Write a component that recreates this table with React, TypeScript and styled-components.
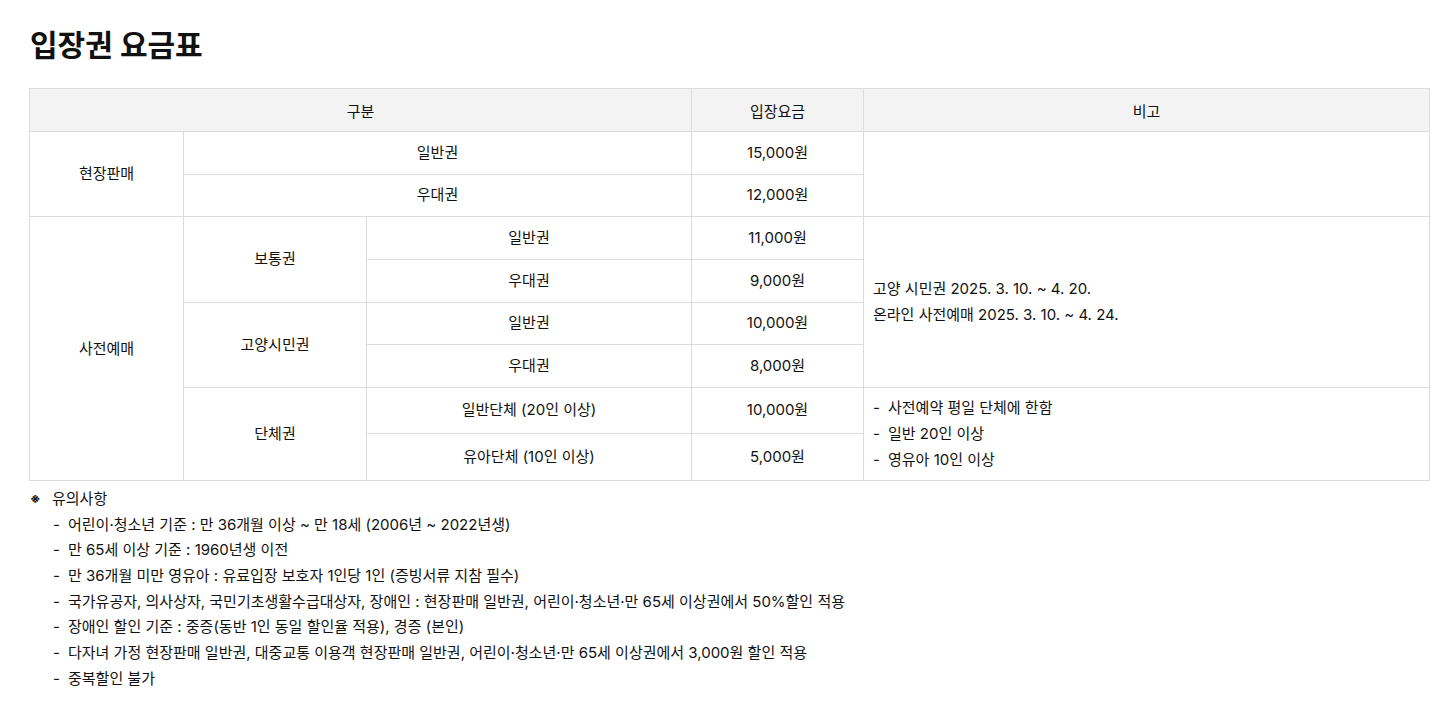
import React from 'react'
import styled, { createGlobalStyle } from 'styled-components'

const GlobalStyle = createGlobalStyle`
  html, body {
    margin: 0;
    padding: 0;
    background: #fff;
  }
  body {
    font-family: Inter, "Noto Sans CJK KR", "Noto Sans", sans-serif;
    color: #111;
  }
`

const Page = styled.div`
  padding: 22px 25px 30px 29px;
`

const Title = styled.h2`
  margin: 0 0 20px 1px;
  font-size: 30px;
  font-weight: 700;
  line-height: 46px;
  letter-spacing: 0;
`

const Table = styled.table`
  width: 1400px;
  border-collapse: collapse;
  table-layout: fixed;
  font-size: 15px;
`

const Th = styled.th`
  height: 42px;
  padding: 0;
  background: #f3f3f3;
  border: 1px solid #dcdcdc;
  font-weight: 400;
  text-align: center;
  vertical-align: middle;
`

const Td = styled.td<{ $left?: boolean; $h?: number }>`
  height: ${p => (p.$h ? `${p.$h}px` : '41.67px')};
  padding: ${p => (p.$left ? '0 9px' : '0')};
  border: 1px solid #dcdcdc;
  text-align: ${p => (p.$left ? 'left' : 'center')};
  vertical-align: middle;
  line-height: 26px;
`

const DashList = styled.ul`
  margin: 0;
  padding: 0;
  list-style: none;
`

const DashItem = styled.li`
  display: flex;
  line-height: 26px;
  &::before {
    content: '-';
    width: 15px;
    flex: none;
  }
`

const Notes = styled.div`
  margin-top: 5px;
  font-size: 15px;
  line-height: 25.7px;
`

const NoteHead = styled.div`
  display: flex;
  padding-left: 1px;
  &::before {
    content: '※';
    width: 22px;
    flex: none;
    font-size: 13px;
    font-weight: 700;
  }
`

const NoteList = styled.ul`
  margin: 0;
  padding: 0 0 0 24px;
  list-style: none;
`

const NoteItem = styled.li`
  display: flex;
  &::before {
    content: '-';
    width: 15px;
    flex: none;
  }
`

const notes = [
  '어린이·청소년 기준 : 만 36개월 이상 ~ 만 18세 (2006년 ~ 2022년생)',
  '만 65세 이상 기준 : 1960년생 이전',
  '만 36개월 미만 영유아 : 유료입장 보호자 1인당 1인 (증빙서류 지참 필수)',
  '국가유공자, 의사상자, 국민기초생활수급대상자, 장애인 : 현장판매 일반권, 어린이·청소년·만 65세 이상권에서 50%할인 적용',
  '장애인 할인 기준 : 중증(동반 1인 동일 할인율 적용), 경증 (본인)',
  '다자녀 가정 현장판매 일반권, 대중교통 이용객 현장판매 일반권, 어린이·청소년·만 65세 이상권에서 3,000원 할인 적용',
  '중복할인 불가',
]

const App = () => {
  return (
    <>
      <GlobalStyle />
      <Page>
        <Title>입장권 요금표</Title>
        <Table>
          <colgroup>
            <col style={{ width: 154 }} />
            <col style={{ width: 183 }} />
            <col style={{ width: 325 }} />
            <col style={{ width: 172 }} />
            <col style={{ width: 566 }} />
          </colgroup>
          <thead>
            <tr>
              <Th colSpan={3}>구분</Th>
              <Th>입장요금</Th>
              <Th>비고</Th>
            </tr>
          </thead>
          <tbody>
            <tr>
              <Td rowSpan={2}>현장판매</Td>
              <Td colSpan={2}>일반권</Td>
              <Td>15,000원</Td>
              <Td rowSpan={2} $left></Td>
            </tr>
            <tr>
              <Td colSpan={2}>우대권</Td>
              <Td>12,000원</Td>
            </tr>
            <tr>
              <Td rowSpan={6}>사전예매</Td>
              <Td rowSpan={2}>보통권</Td>
              <Td>일반권</Td>
              <Td>11,000원</Td>
              <Td rowSpan={4} $left>
                고양 시민권 2025. 3. 10. ~ 4. 20.
                <br />
                온라인 사전예매 2025. 3. 10. ~ 4. 24.
              </Td>
            </tr>
            <tr>
              <Td>우대권</Td>
              <Td>9,000원</Td>
            </tr>
            <tr>
              <Td rowSpan={2}>고양시민권</Td>
              <Td>일반권</Td>
              <Td>10,000원</Td>
            </tr>
            <tr>
              <Td>우대권</Td>
              <Td>8,000원</Td>
            </tr>
            <tr>
              <Td rowSpan={2}>단체권</Td>
              <Td $h={45}>일반단체 (20인 이상)</Td>
              <Td $h={45}>10,000원</Td>
              <Td rowSpan={2} $left>
                <DashList>
                  <DashItem>사전예약 평일 단체에 한함</DashItem>
                  <DashItem>일반 20인 이상</DashItem>
                  <DashItem>영유아 10인 이상</DashItem>
                </DashList>
              </Td>
            </tr>
            <tr>
              <Td $h={46}>유아단체 (10인 이상)</Td>
              <Td $h={46}>5,000원</Td>
            </tr>
          </tbody>
        </Table>
        <Notes>
          <NoteHead>유의사항</NoteHead>
          <NoteList>
            {notes.map((n, i) => (
              <NoteItem key={i}>{n}</NoteItem>
            ))}
          </NoteList>
        </Notes>
      </Page>
    </>
  )
}

export default App
